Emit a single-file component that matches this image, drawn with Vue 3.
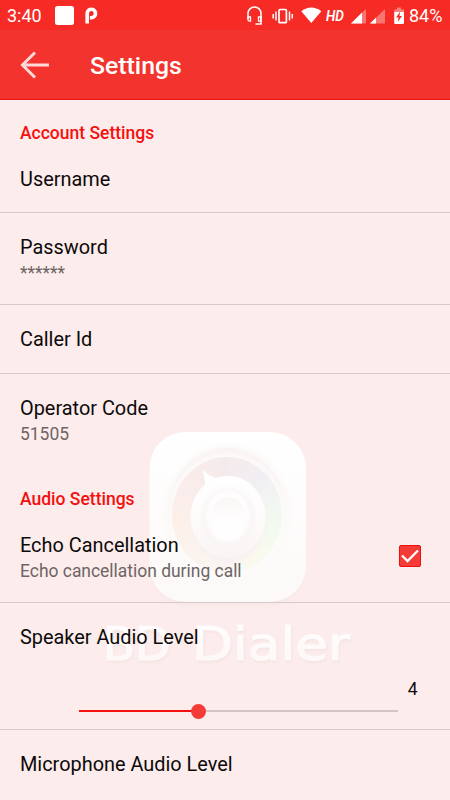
<template>
  <div class="screen">
    <!-- Background artwork -->
    <svg class="watermark" viewBox="0 0 270 260" aria-hidden="true">
      <defs>
        <linearGradient id="tile" x1="0" y1="0" x2="0" y2="1">
          <stop offset="0" stop-color="#ffffff" />
          <stop offset="1" stop-color="#fcf9f8" />
        </linearGradient>
        <linearGradient id="knob" x1="0" y1="0" x2="0" y2="1">
          <stop offset="0" stop-color="#ffffff" />
          <stop offset="0.5" stop-color="#fefbfb" />
          <stop offset="1" stop-color="#faf5f4" />
        </linearGradient>
        <linearGradient id="cap" x1="0" y1="0" x2="0" y2="1">
          <stop offset="0" stop-color="#faf6f6" />
          <stop offset="0.6" stop-color="#fffefe" />
          <stop offset="1" stop-color="#ffffff" />
        </linearGradient>
        <linearGradient id="letters" x1="0" y1="0" x2="0" y2="1">
          <stop offset="0" stop-color="#ffffff" />
          <stop offset="1" stop-color="#fdf6f6" />
        </linearGradient>
        <filter id="soft" x="-20%" y="-20%" width="140%" height="140%">
          <feGaussianBlur stdDeviation="2" />
        </filter>
        <filter id="shade" x="-20%" y="-20%" width="140%" height="140%">
          <feGaussianBlur stdDeviation="1.2" />
        </filter>
      </defs>
      <rect x="51" y="18" width="153" height="168" rx="36" fill="#f7e8e8" filter="url(#soft)" />
      <rect x="49.500" y="12" width="156.500" height="170" rx="36" fill="url(#tile)" />
      <ellipse cx="127" cy="93" rx="64" ry="69" fill="#fcfaf9" filter="url(#soft)" />
      <ellipse cx="127" cy="91" rx="59" ry="63" fill="#faf5f4" />
      <ellipse cx="127" cy="97" rx="59" ry="63" fill="#fdfbfa" filter="url(#soft)" />
      <foreignObject x="72" y="37" width="110" height="116">
        <div class="ring"></div>
      </foreignObject>
      <ellipse cx="128" cy="100" rx="38" ry="42" fill="#f7f1f0" filter="url(#soft)" />
      <path d="M103 49 Q108 57 120 59 L107 76 Z" fill="#ffffff" />
      <ellipse cx="128" cy="97" rx="37.500" ry="41" fill="url(#knob)" />
      <ellipse cx="128" cy="98" rx="27" ry="30" fill="#faf6f6" filter="url(#soft)" />
      <ellipse cx="128" cy="96" rx="22" ry="26" fill="#fefcfc" filter="url(#shade)" />
      <ellipse cx="128.500" cy="98" rx="17" ry="21" fill="url(#cap)" />
      <g class="brand brand-shadow" filter="url(#shade)">
        <text x="4" y="242" textLength="68" lengthAdjust="spacingAndGlyphs">BD</text>
        <text x="93" y="242" textLength="158" lengthAdjust="spacingAndGlyphs">Dialer</text>
      </g>
      <g class="brand brand-face">
        <text x="3" y="239.500" textLength="68" lengthAdjust="spacingAndGlyphs">BD</text>
        <text x="92" y="239.500" textLength="158" lengthAdjust="spacingAndGlyphs">Dialer</text>
      </g>
    </svg>

    <header>
      <div class="status-bar">
        <span class="clock">3:40</span>
        <svg class="notifications" width="44" height="22" viewBox="0 0 44 22">
          <rect x="1" y="1" width="19" height="19" rx="2.500" fill="#fff" />
          <path d="M33.200 18.500V8a4.200 4.200 0 1 1 4.200 4.700h-1.500" fill="none" stroke="#fff" stroke-width="3.600" />
        </svg>

        <svg class="system-icons" width="162" height="24" viewBox="245 4 162 24">
          <!-- headset -->
          <path d="M248 19v-5.500a6.500 6.500 0 0 1 13 0V24h-5.500" fill="none" stroke="#fff" stroke-width="1.500" />
          <path d="M248 17h2.500v4.200h-1a1.500 1.500 0 0 1-1.500-1.500zM261 17h-2.500v4.200h2.500z" fill="none" stroke="#fff" stroke-width="1.300" />
          <!-- vibrate -->
          <rect x="279" y="9.500" width="7.400" height="13.200" rx="1" fill="none" stroke="#fff" stroke-width="1.700" />
          <path d="M276 11.500v9M273.200 14v4.500M289.500 11.500v9M292.300 14v4.500" stroke="#fff" stroke-width="1.500" />
          <!-- wifi -->
          <path d="M301.300 11.300Q311.300 3.800 321.300 11.300L311.300 23Z" fill="#fff" />
          <text class="hd" x="326" y="20.500" textLength="18" lengthAdjust="spacingAndGlyphs">HD</text>
          <!-- signal -->
          <path d="M366 9v14.500h-15z" fill="#fff" opacity="0.35" />
          <path d="M351 23.500L362 12.500v11z" fill="#fff" />
          <path d="M385 9v14.500h-15z" fill="#fff" opacity="0.35" />
          <path d="M370 23.500l6-6v6z" fill="#fff" />
          <!-- battery -->
          <path d="M397 7.500h4v2h3v3h-9.800v-3h2.800z" fill="#fff" opacity="0.4" />
          <path d="M394.200 12h9.800v11a1 1 0 0 1-1 1h-7.800a1 1 0 0 1-1-1z" fill="#fff" />
          <path d="M400.200 11.500l-4.200 6h2.600l-.8 4.500 4.200-6h-2.600z" fill="#f62b25" />
        </svg>
        <span class="percent">84%</span>
      </div>

      <div class="app-bar">
        <svg class="back" width="30" height="28" viewBox="0 0 30 28">
          <path d="M29 14H3M15 1.500L2.500 14 15 26.500" fill="none" stroke="#ffd9d7" stroke-width="3" />
        </svg>
        <h1>Settings</h1>
      </div>
    </header>

    <main>
      <section v-for="group in groups" :key="group.name">
        <h2>{{ group.name }}</h2>
        <div
          v-for="item in group.items"
          :key="item.title"
          class="row"
          :class="{ last: item.last }"
        >
          <div class="line">
            <div>
              <div class="title">{{ item.title }}</div>
              <div v-if="item.summary" class="summary">{{ item.summary }}</div>
            </div>
            <svg v-if="item.checkbox" class="checkbox" width="22" height="22" viewBox="0 0 22 22">
              <rect x="0.500" y="0.500" width="21" height="21" rx="1.500" fill="#f43b38" stroke="#ee100e" />
              <path d="M3 10.500l5.500 5.500L19 5.500" fill="none" stroke="#fff" stroke-width="2.300" />
            </svg>
          </div>
          <div v-if="item.level" class="slider">
            <div class="value">{{ item.level }}</div>
            <div class="track">
              <div class="fill" :style="{ width: fillWidth(item) }">
                <span class="thumb"></span>
              </div>
            </div>
          </div>
        </div>
      </section>
    </main>
  </div>
</template>

<script setup>
const groups = [
  {
    name: 'Account Settings',
    items: [
      { title: 'Username' },
      { title: 'Password', summary: '******' },
      { title: 'Caller Id' },
      { title: 'Operator Code', summary: '51505', last: true }
    ]
  },
  {
    name: 'Audio Settings',
    items: [
      { title: 'Echo Cancellation', summary: 'Echo cancellation during call', checkbox: true },
      { title: 'Speaker Audio Level', level: 4, min: 1, max: 9 },
      { title: 'Microphone Audio Level', last: true }
    ]
  }
]

const fillWidth = (item) => `${((item.level - item.min) / (item.max - item.min)) * 100}%`
</script>

<style>
body {
  margin: 0;
  background: #fdecec;
}
</style>

<style scoped>
.screen {
  position: relative;
  width: 450px;
  height: 800px;
  overflow: hidden;
  background: #fdecec;
  font-family: Roboto, 'Liberation Sans', sans-serif;
  color: #0c0a0a;
}

/* artwork behind the list */
.watermark {
  position: absolute;
  left: 100px;
  top: 420px;
  width: 270px;
  height: 260px;
}

.ring {
  width: 110px;
  height: 116px;
  border-radius: 50%;
  background: conic-gradient(#f5ebed, #f1eff3 45deg, #f2f6f2 75deg, #f3fbee 110deg, #fafaee 145deg, #f9f5f3 180deg, #fbf3ed 225deg, #fdf0e8 260deg, #fbedeb 295deg, #f5eaeb);
}

.brand {
  font-family: 'DejaVu Sans', sans-serif;
  font-size: 46px;
  stroke-width: 1.2px;
}

.brand-shadow {
  fill: #f5e4e4;
  stroke: #f5e4e4;
}

.brand-face {
  fill: url(#letters);
  stroke: #fefafa;
}

header,
main {
  position: relative;
}

.status-bar {
  display: flex;
  align-items: center;
  box-sizing: border-box;
  height: 30px;
  padding: 2px 8px 0 7px;
  background: #f62b25;
  color: #fff;
  font-size: 18px;
  line-height: 28px;
}

.clock {
  width: 47px;
}

.system-icons {
  margin-left: auto;
}

.percent {
  width: 33px;
  margin-left: 2px;
  white-space: nowrap;
}

.hd {
  fill: #fff;
  font-size: 15px;
  font-style: italic;
  font-weight: 600;
}

.app-bar {
  display: flex;
  align-items: center;
  box-sizing: border-box;
  height: 70px;
  padding: 2px 20px 0;
  border-bottom: 1px solid #ec1412;
  background: #f3332e;
}

.back {
  margin-bottom: 1px;
}

h1 {
  margin: 1px 0 0 40px;
  color: #fff;
  font-size: 24.8px;
  font-weight: 500;
  line-height: 32px;
}

h2 {
  height: 25px;
  margin: 0;
  padding: 20px 20px 0;
  color: #f4100e;
  font-size: 17.5px;
  font-weight: 500;
  line-height: 26px;
}

.row {
  padding: 21px 0;
  border-bottom: 1px solid #d9caca;
}

section:first-child .row:nth-child(2) {
  padding-bottom: 20px;
}

.row.last {
  padding-bottom: 22px;
  border-bottom: 0;
}

.line {
  display: flex;
  align-items: center;
  justify-content: space-between;
  padding: 0 29px 0 20px;
}

.title {
  height: 26px;
  font-size: 19.9px;
  line-height: 28px;
}

.summary {
  height: 23px;
  color: #6d6565;
  font-size: 17.45px;
  line-height: 27px;
}

.checkbox {
  margin-bottom: 1px;
}

.slider {
  height: 50px;
  margin-bottom: -21px;
  padding: 29px 52.500px 0 79px;
}

.value {
  width: 20px;
  height: 20px;
  margin: 0 -20px 0 auto;
  font-size: 17.5px;
  line-height: 20px;
  text-align: right;
}

.track {
  height: 2px;
  margin-top: 11px;
  background: #d3c5c5;
}

.fill {
  position: relative;
  height: 2px;
  background: #f4100e;
}

.thumb {
  position: absolute;
  top: -6.500px;
  right: -7.500px;
  width: 15px;
  height: 15px;
  border-radius: 50%;
  background: #f43b38;
}
</style>
